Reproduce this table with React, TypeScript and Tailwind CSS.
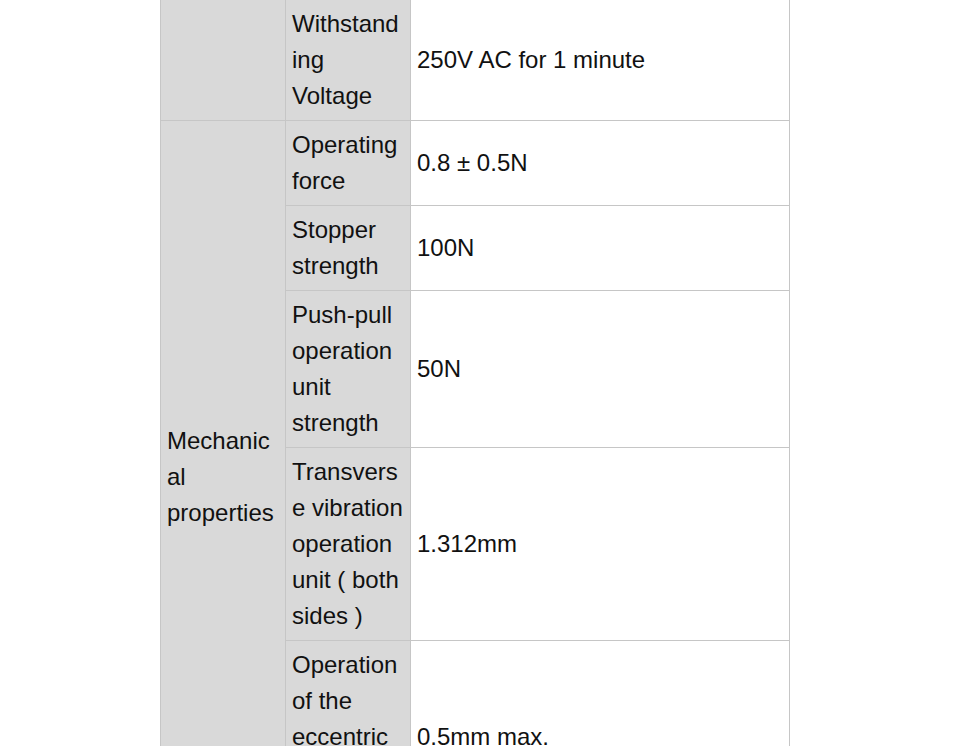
const rows: { label: string; value: string }[] = [
  { label: "Operating force", value: "0.8 ± 0.5N" },
  { label: "Stopper strength", value: "100N" },
  { label: "Push-pull operation unit strength", value: "50N" },
  { label: "Transverse vibration operation unit ( both sides )", value: "1.312mm" },
  { label: "Operation of the eccentric rotation unit", value: "0.5mm max." },
]

const cell = "border border-[#c6c6c6] px-[6px] py-[6px] align-middle break-words"

export default function App() {
  return (
    <div className="min-h-screen bg-white overflow-hidden">
      <div className="ml-[160px] -mt-px">
        <table
          className="w-[629px] table-fixed border-collapse text-[24px] leading-[36px] text-[#111]"
          style={{ fontFamily: '"Liberation Sans", Arial, sans-serif' }}
        >
          <colgroup>
            <col className="w-[125px]" />
            <col className="w-[125px]" />
            <col className="w-[379px]" />
          </colgroup>
          <tbody>
            <tr>
              <td className={`${cell} bg-[#d9d9d9]`}></td>
              <td className={`${cell} bg-[#d9d9d9]`}>Withstanding Voltage</td>
              <td className={cell}>250V AC for 1 minute</td>
            </tr>
            {rows.map((r, i) => (
              <tr key={r.label}>
                {i === 0 && (
                  <td rowSpan={rows.length} className={`${cell} bg-[#d9d9d9]`}>
                    Mechanical properties
                  </td>
                )}
                <td className={`${cell} bg-[#d9d9d9]`}>{r.label}</td>
                <td className={cell}>{r.value}</td>
              </tr>
            ))}
          </tbody>
        </table>
      </div>
    </div>
  )
}
